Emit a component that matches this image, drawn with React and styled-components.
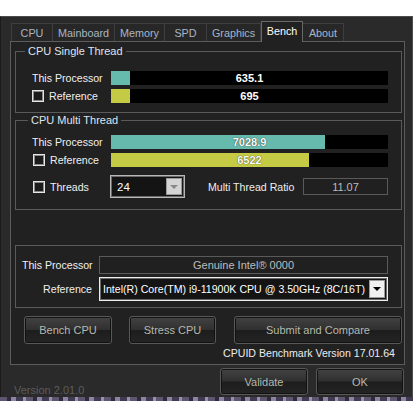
import React from "react";
import styled, { createGlobalStyle, css } from "styled-components";

const GlobalStyle = createGlobalStyle`
    body {
        margin: 0;
        background: #ffffff;
        font-family: "Liberation Sans", Arial, sans-serif;
        font-size: 10.6px;
    }
`

const Window = styled.div`
    margin-top: 16px;
    width: 413px;
    height: 381px;
    box-sizing: border-box;
    background: #2a2a2a;
    border: 1px solid #4c4c4c;
    border-left-color: #1c1c1c;
    border-bottom: none;
    padding: 4px 7px 0 9px;
    display: flex;
    flex-direction: column;
`

const Desktop = styled.div`
    width: 413px;
    height: 4px;
    background: repeating-linear-gradient(90deg, #5e5670 0 7px, #2e2a3a 7px 11px, #8c84a0 11px 16px, #403a52 16px 23px, #9a92ac 23px 26px);
`

const TabStrip = styled.div`
    display: flex;
    align-items: flex-end;
    height: 20px;
    margin-left: 1px;
    position: relative;
    z-index: 1;
`

const Tab = styled.div`
    width: ${p => p.$w}px;
    height: 18px;
    box-sizing: border-box;
    border: 1px solid #3e3e3e;
    border-left: none;
    border-bottom: none;
    background: #272727;
    color: #a9b5c5;
    font-size: 10.8px;
    display: flex;
    align-items: center;
    justify-content: center;
    &:first-child {
        border-left: 1px solid #3e3e3e;
    }
    ${p => p.$active && css`
        height: 21px;
        margin-bottom: -1px;
        background: #212121;
        border: 1px solid #686868;
        border-bottom: none;
        color: #ffffff;
        padding-bottom: 3px;
    `}
`

const Panel = styled.div`
    width: 395px;
    height: 324px;
    box-sizing: border-box;
    background: #212121;
    border: 1px solid #5c5c5c;
    padding: 3px 2px 0 4px;
    display: flex;
    flex-direction: column;
`

const Group = styled.fieldset`
    margin: ${p => p.$mt || 0}px 0 0 0;
    padding: ${p => p.$pad};
    border: 1px solid #5a5a5a;
    min-width: 0;
    display: flex;
    flex-direction: column;
    gap: ${p => p.$gap || 4}px;
`

const Legend = styled.legend`
    margin-left: ${p => p.$ml}px;
    padding: 0 3px;
    line-height: 13px;
    font-size: 11px;
    color: #dde5ee;
`

const BarRow = styled.div`
    display: grid;
    grid-template-columns: 79px minmax(0, 1fr);
    align-items: center;
    height: 14px;
`

const Label = styled.div`
    display: flex;
    align-items: center;
    gap: 5px;
    color: #f0f0f0;
    white-space: nowrap;
    margin-left: ${p => p.$ml || 0}px;
`

const Check = styled.span`
    width: 12px;
    height: 12px;
    box-sizing: border-box;
    border: 1px solid #e6e6e6;
    background: #1c1c1c;
    box-shadow: inset 0 0 0 1px #8a8a8a;
    flex: none;
`

const Bar = styled.div`
    display: grid;
    height: 14px;
    background: #000000;
`

const Fill = styled.div`
    grid-area: 1 / 1;
    height: 14px;
    background: ${p => p.$color};
`

const BarValue = styled.div`
    grid-area: 1 / 1;
    display: flex;
    align-items: center;
    justify-content: center;
    color: #ffffff;
    font-weight: bold;
    font-size: 11px;
    text-shadow: 0 0 1px #000;
`

const ThreadsRow = styled.div`
    display: flex;
    align-items: center;
    height: 23px;
    margin-top: 4px;
`

const ThreadsLabel = styled(Label)`
    width: 77px;
    margin-left: 1px;
`

const Select = styled.div`
    width: ${p => p.$w ? p.$w + "px" : "auto"};
    min-width: 0;
    height: ${p => p.$h}px;
    box-sizing: border-box;
    border: 1px solid ${p => p.$light ? "#ececec" : "#b8b8b8"};
    box-shadow: inset 0 0 0 1px #6a6a6a;
    background: #141414;
    color: #ffffff;
    display: flex;
    align-items: center;
    padding: 2px;
    font-size: ${p => p.$fs}px;
`

const SelectText = styled.div`
    flex: 1;
    min-width: 0;
    padding-left: ${p => p.$pl}px;
    white-space: nowrap;
    overflow: hidden;
`

const Arrow = styled.div`
    width: 16px;
    flex: none;
    align-self: stretch;
    box-sizing: border-box;
    background: ${p => p.$light ? "#f0f0f0" : "#d4d4d4"};
    border: 1px solid #9a9a9a;
    display: flex;
    align-items: center;
    justify-content: center;
    &::after {
        content: "";
        border-left: 4px solid transparent;
        border-right: 4px solid transparent;
        border-top: 4px solid ${p => p.$light ? "#000" : "#8a8a8a"};
    }
`

const RatioLabel = styled.div`
    margin-left: 23px;
    color: #eeeeee;
`

const Field = styled.div`
    height: ${p => p.$h}px;
    box-sizing: border-box;
    border: 1px solid #5a5a5a;
    background: #202020;
    color: #bdbdbd;
    font-size: 11px;
    display: flex;
    align-items: center;
    justify-content: center;
    ${p => p.$w && css`
        width: ${p.$w}px;
        margin-left: auto;
    `}
`

const ProcGrid = styled.div`
    display: grid;
    grid-template-columns: 70px minmax(0, 1fr);
    column-gap: 7px;
    row-gap: 3px;
    align-items: center;
`

const RightLabel = styled.div`
    text-align: right;
    color: #f0f0f0;
    white-space: nowrap;
`

const ButtonRow = styled.div`
    display: flex;
    margin-top: 8px;
    padding-left: 9px;
    gap: 17px;
`

const Button = styled.div`
    width: ${p => p.$w}px;
    height: ${p => p.$h || 28}px;
    margin-left: ${p => p.$ml || 0}px;
    box-sizing: border-box;
    border: 1px solid #585858;
    border-radius: 3px;
    box-shadow: inset 0 0 0 1px #121212;
    background: linear-gradient(#434343, #303030 48%, #1d1d1d 52%, #242424);
    color: #b6b8ae;
    font-size: 11px;
    display: flex;
    align-items: center;
    justify-content: center;
`

const VersionNote = styled.div`
    text-align: right;
    padding-right: 7px;
    margin-top: 3px;
    color: #ececec;
`

const BottomBar = styled.div`
    display: flex;
    align-items: flex-start;
    height: 32px;
    padding-top: 3px;
    box-sizing: border-box;
    gap: 8px;
`

const AppVersion = styled.div`
    align-self: flex-end;
    margin: 0 auto 1px 4px;
    color: #5c5c5c;
    font-size: 11px;
`

const tabs = [
    ["CPU", 42], ["Mainboard", 62], ["Memory", 50], ["SPD", 42],
    ["Graphics", 54], ["Bench", 42], ["About", 41],
]

const BenchBar = ({ value, pct, color }) => (
    <Bar>
        <Fill $color={color} style={{ width: pct + "%" }} />
        <BarValue>{value}</BarValue>
    </Bar>
)

const TEAL = "#66b9ad"
const YELLOW = "#c4ca43"

const App = () => {
    return (
        <>
            <GlobalStyle />
            <Window>
                <TabStrip>
                    {tabs.map(([name, w]) => (
                        <Tab key={name} $w={w} $active={name === "Bench"}>{name}</Tab>
                    ))}
                </TabStrip>
                <Panel>
                    <Group $pad="13px 13px 9px 16px">
                        <Legend $ml={-7}>CPU Single Thread</Legend>
                        <BarRow>
                            <Label>This Processor</Label>
                            <BenchBar value="635.1" pct={7} color={TEAL} />
                        </BarRow>
                        <BarRow>
                            <Label><Check />Reference</Label>
                            <BenchBar value="695" pct={7} color={YELLOW} />
                        </BarRow>
                    </Group>
                    <Group $mt={1} $pad="8px 13px 11px 16px">
                        <Legend $ml={-4}>CPU Multi Thread</Legend>
                        <BarRow>
                            <Label>This Processor</Label>
                            <BenchBar value="7028.9" pct={77.3} color={TEAL} />
                        </BarRow>
                        <BarRow>
                            <Label $ml={1}><Check />Reference</Label>
                            <BenchBar value="6522" pct={71.5} color={YELLOW} />
                        </BarRow>
                        <ThreadsRow>
                            <ThreadsLabel><Check />Threads</ThreadsLabel>
                            <Select $w={75} $h={23} $fs={11.5}>
                                <SelectText $pl={4}>24</SelectText>
                                <Arrow />
                            </Select>
                            <RatioLabel>Multi Thread Ratio</RatioLabel>
                            <Field $w={85} $h={17}>11.07</Field>
                        </ThreadsRow>
                    </Group>
                    <Group $mt={35} $pad="10px 13px 6px 6px">
                        <ProcGrid>
                            <RightLabel>This Processor</RightLabel>
                            <Field $h={18}>Genuine Intel® 0000</Field>
                            <RightLabel>Reference</RightLabel>
                            <Select $h={24} $fs={10.6} $light>
                                <SelectText $pl={1}>Intel(R) Core(TM) i9-11900K CPU @ 3.50GHz (8C/16T)</SelectText>
                                <Arrow $light />
                            </Select>
                        </ProcGrid>
                    </Group>
                    <ButtonRow>
                        <Button $w={88}>Bench CPU</Button>
                        <Button $w={87}>Stress CPU</Button>
                        <Button $w={168} $ml={1}>Submit and Compare</Button>
                    </ButtonRow>
                    <VersionNote>CPUID Benchmark Version 17.01.64</VersionNote>
                </Panel>
                <BottomBar>
                    <AppVersion>Version 2.01.0</AppVersion>
                    <Button $w={88} $h={27}>Validate</Button>
                    <Button $w={88} $h={27} style={{ marginRight: 1 }}>OK</Button>
                </BottomBar>
            </Window>
            <Desktop />
        </>
    )
}

export default App;
